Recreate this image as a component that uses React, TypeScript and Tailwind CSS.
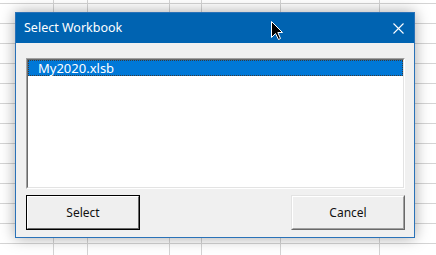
export default function App() {
  const cols = [54, 34, 82, 32, 79, 99, 60];

  return (
    <div className="relative h-[255px] w-[436px] overflow-hidden bg-white font-['Noto_Sans',sans-serif]">
      {/* spreadsheet grid behind the dialog */}
      <div className="flex h-full w-full bg-[repeating-linear-gradient(to_bottom,transparent_0px,transparent_3px,#d4d4d4_3px,#d4d4d4_4px,transparent_4px,transparent_20px)] bg-[length:100%_20px] bg-[position:0_0]">
        {cols.map((w, i) => (
          <div key={i} className="h-full shrink-0 border-r border-[#d4d4d4]" style={{ width: w }} />
        ))}
      </div>

      {/* dialog window */}
      <div className="absolute left-[15px] top-[12px] flex h-[226px] w-[400px] flex-col border border-[#2a72b8] bg-[#f0f0f0] shadow-[0_0_14px_rgba(0,0,0,0.35)]">
        <div className="flex h-[30px] items-center justify-between bg-[#0063b1] pl-[8px] pr-[10px]">
          <span className="text-[12.5px] text-white">Select Workbook</span>
          <svg width="11" height="11" viewBox="0 0 11 11" className="mt-[1px]">
            <path d="M0.5 0.5 L10.5 10.5 M10.5 0.5 L0.5 10.5" stroke="white" strokeWidth="1.1" />
          </svg>
        </div>

        <div className="flex flex-1 flex-col pl-[10px] pr-[9px] pt-[15px]">
          {/* list box */}
          <div className="h-[131px] w-[379px] border border-b-white border-l-[#a0a0a0] border-r-white border-t-[#a0a0a0]">
            <div className="h-full w-full border border-b-[#e3e3e3] border-l-[#696969] border-r-[#e3e3e3] border-t-[#696969] bg-white">
              <div className="flex h-[16px] items-center border border-dotted border-[#3a3a3a] bg-[#0078d7] pl-[9px] text-[13px] leading-none text-white">
                My2020.xlsb
              </div>
            </div>
          </div>

          <div className="mt-[6px] flex justify-between">
            <button className="h-[35px] w-[114px] border border-black">
              <div className="flex h-full w-full items-center justify-center border border-b-[#696969] border-l-white border-r-[#696969] border-t-white bg-[#efefef] text-[12px] text-[#111]">
                Select
              </div>
            </button>
            <button className="h-[35px] w-[114px] border border-b-[#696969] border-l-[#e3e3e3] border-r-[#696969] border-t-[#e3e3e3]">
              <div className="flex h-full w-full items-center justify-center border border-b-[#a0a0a0] border-l-white border-r-[#a0a0a0] border-t-white bg-[#efefef] text-[12px] text-[#111]">
                Cancel
              </div>
            </button>
          </div>
        </div>
      </div>

      {/* mouse pointer */}
      <svg width="13" height="20" viewBox="0 0 13 20" className="absolute left-[271px] top-[21px]">
        <path d="M0.5 0.5 L0.5 16.5 L4.5 12.5 L7.5 18.5 L9.5 17.5 L6.8 11.5 L11.5 11.5 Z" fill="black" stroke="white" strokeWidth="1" />
      </svg>
    </div>
  );
}
